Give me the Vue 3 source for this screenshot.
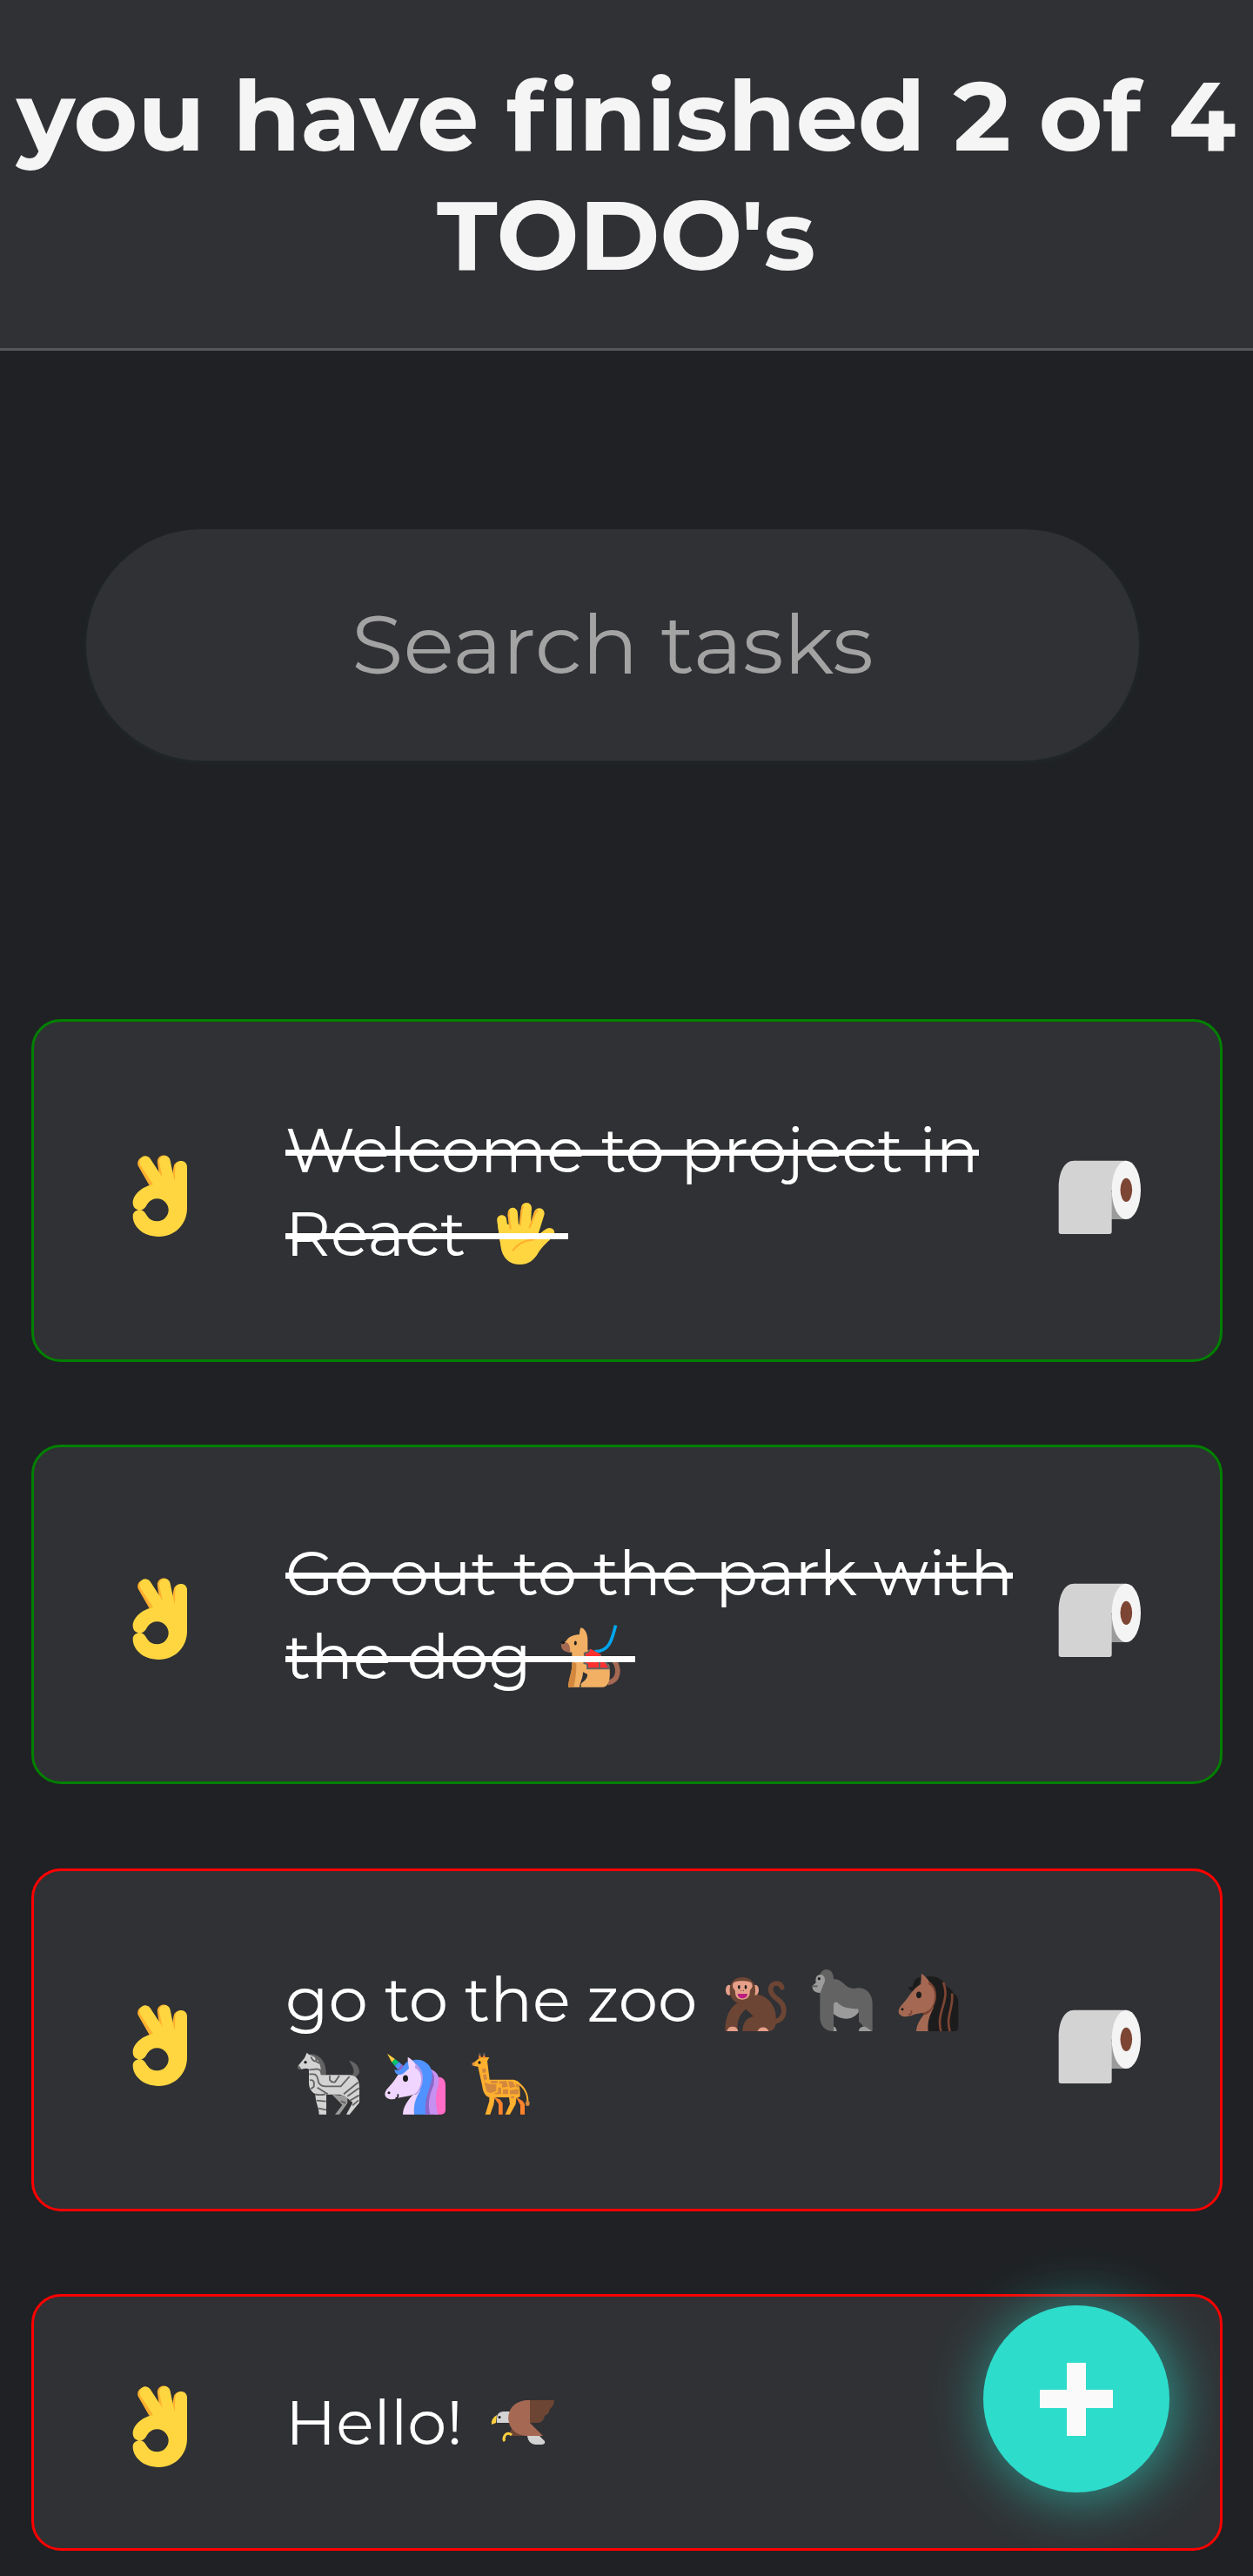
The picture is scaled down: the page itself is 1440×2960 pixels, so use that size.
<script setup>
const vFit = {
  mounted(el, { value }) {
    const natural = el.offsetWidth
    el.style.transform = `scaleX(${value / natural})`
    el.style.marginRight = `${value - natural}px`
  },
}

const tasks = [
  { done: true, cls: 'first', lines: [
    { text: 'Welcome to project in', width: 797, emoji: [] },
    { text: 'React', width: 207, cls: 'react', emoji: ['palm'] },
  ] },
  { done: true, cls: 'second', lines: [
    { text: 'Go out to the park with', width: 836, emoji: [] },
    { text: 'the dog', width: 283, cls: 'dog', emoji: ['dog'] },
  ] },
  { done: false, cls: 'third', lines: [
    { text: 'go to the zoo', width: 473, cls: 'zoo', emoji: ['monkey', 'gorilla', 'horse'] },
    { text: '', width: 0, cls: 'zoo-more', emoji: ['zebra', 'unicorn', 'giraffe'] },
  ] },
  { done: false, cls: 'fourth', lines: [
    { text: 'Hello!', width: 204, cls: 'hello', emoji: ['eagle'] },
  ] },
]

const boxes = {
  palm: '0 0 300 288',
  dog: '0 19 300 288',
  monkey: '0 -3 300 288',
  gorilla: '300 -3 300 288',
  horse: '600 -3 300 288',
  zebra: '0 0 300 288',
  unicorn: '300 0 300 288',
  giraffe: '600 0 300 288',
  eagle: '0 0 100 96',
}
</script>

<template>
  <div class="app">
    <header class="header">
      <h1>
        <span class="row"><span v-fit="1401" class="fit">you have <span class="loose">f</span>inished 2 of 4</span></span>
        <span class="row"><span v-fit="435" class="fit">TODO's</span></span>
      </h1>
    </header>

    <div class="search"><span v-fit="600" class="fit">Search tasks</span></div>

    <main class="list">
      <article v-for="task in tasks" :key="task.cls" class="card" :class="[task.cls, { done: task.done }]">
        <svg class="ok" viewBox="0 0 330 390">
          <g stroke-linecap="round" fill="none">
            <path d="M106 80L146 150" stroke="#ffb02e" stroke-width="43" />
            <path d="M174 74L182 130" stroke="#ffb02e" stroke-width="43" />
            <path d="M230 95L222 140" stroke="#ffb02e" stroke-width="43" />
            <path d="M111 75L160 150" stroke="#ffd640" stroke-width="40" />
            <path d="M178 73L194 150" stroke="#ffd640" stroke-width="38" />
          </g>
          <path fill="#ffd640" fill-rule="evenodd" d="M152 152L213 137L214 93C214 65 255 65 255 93V235C255 291 213 333 158 333C100 333 68 296 68 262C68 248 80 241 92 241C78 241 68 232 68 216C68 187 104 153 152 152ZM92 241C108 241 112 256 119 264C127 275 138 280 152 280A39 39 0 0 0 152 202C138 202 127 208 119 219C112 230 108 241 92 241Z" />
        </svg>

        <div class="text">
          <div v-for="(line, i) in task.lines" :key="i" class="line" :class="line.cls">
            <span v-if="line.text" v-fit="line.width" class="fit">{{ line.text }}</span>
            <svg v-for="name in line.emoji" :key="name" class="emoji" :viewBox="boxes[name]">
              <g v-if="name === 'palm'">
                <g stroke="#ffd640" stroke-linecap="round" fill="none">
                  <path d="M80 95L90 165" stroke-width="33" />
                  <path d="M118 70L124 150" stroke-width="33" />
                  <path d="M165 54L160 150" stroke-width="36" />
                  <path d="M209 73L185 150" stroke-width="36" />
                </g>
                <path fill="#ffd640" d="M66 110L76 185C81 226 106 249 143 249C175 249 192 232 205 210C222 182 240 172 258 150C270 132 250 116 234 126C222 133 214 142 204 145L200 110L90 110Z" />
                <path d="M105 67Q102 75 105 90L110 125M153 50Q148 55 147 75L143 113M202 63Q195 68 192 80L176 121M119 200C135 178 160 165 190 163" fill="none" stroke="#ffb02e" stroke-width="6.5" stroke-linecap="round" />
              </g>
              <g v-else-if="name === 'dog'">
                <path d="M233 54C221 90 217 146 160 144" fill="none" stroke="#00a6ed" stroke-width="11" />
                <path d="M224 172C248 200 246 246 205 252" fill="none" stroke="#a56953" stroke-width="17" />
                <path fill="#f2b064" d="M113 62C125 64 136 80 136 105V138L210 190C216 225 213 267 188 267H69C70 240 82 220 82 190V147C60 147 45 135 45 118L62 108C70 90 95 86 108 85C108 75 110 65 113 62Z" />
                <path fill="#a56953" d="M45 113H60C70 113 76 122 76 147C58 147 45 138 45 125Z" />
                <path fill="#d3883e" d="M84 180C82 215 70 235 69 267H88C94 240 98 215 97 185Z" />
                <path fill="#303134" d="M120 215L135 222C137 240 118 248 113 256V267H108C110 250 120 235 120 215Z" />
                <ellipse cx="51" cy="113" rx="7" ry="5.5" fill="#1c1c1c" />
                <ellipse cx="94" cy="115" rx="4.5" ry="7.5" fill="#1c1c1c" />
                <path fill="#ff3030" stroke="#636363" stroke-width="6" stroke-linejoin="round" d="M125 150L138 146L144 138L180 157L210 198V203H135V188L124 184L129 168Z" />
                <path d="M144 138L180 157" stroke="#ff3030" stroke-width="7" />
                <path d="M177 178V203" stroke="#636363" stroke-width="6" />
              </g>
              <g v-else-if="name === 'monkey'">
                <path d="M212 216C252 205 250 160 222 140C180 110 200 84 217 84C228 84 234 90 236 98" fill="none" stroke="#6d4534" stroke-width="17" stroke-linecap="round" />
                <path fill="#6d4534" d="M125 122C170 113 215 150 215 200C220 235 205 249 190 249H100C100 220 115 202 138 198L112 173C92 187 78 215 84 249H40C40 195 60 160 90 148Z" />
                <path fill="#e6a08a" d="M46 249A20 20 0 0 1 85 249ZM152 249A20 20 0 0 1 190 249Z" />
                <ellipse cx="53" cy="107" rx="11" ry="18" fill="#e6a08a" />
                <ellipse cx="145" cy="107" rx="11" ry="18" fill="#e6a08a" />
                <rect x="56" y="63" width="88" height="91" rx="42" fill="#6d4534" />
                <path fill="#e6a08a" d="M66 92C66 78 78 76 99 76C120 76 134 78 134 92C134 103 124 103 125 117C125 130 115 140 99 140C84 140 75 130 75 117C76 103 66 104 66 92Z" />
                <path fill="#1c1c1c" d="M84 97a4 7 0 0 1 8 0a4 7 0 0 1-8 0M107 97a4 7 0 0 1 8 0a4 7 0 0 1-8 0" />
                <path d="M94 109h3M102 109h3" stroke="#6d4534" stroke-width="4" />
                <path fill="#bb1d80" d="M83 120H117C117 141 83 141 83 120Z" />
              </g>
              <g v-else-if="name === 'gorilla'">
                <path fill="#636363" d="M366 60C368 28 415 24 414 70C447 67 450 102 485 102C520 92 548 115 548 155V249H532L501 215V180L414 155V249C385 249 367 230 367 200V100Z" />
                <path fill="#9b9b9b" d="M353 82C349 60 360 52 372 54C386 58 388 75 378 90L368 117C350 117 338 106 341 92ZM414 190V158C414 146 426 146 431 154C445 168 475 172 497 172Q502 178 500 184C480 213 440 212 414 190ZM414 233Q424 235 425 249H414ZM501 249C501 238 512 232 524 234Q535 240 546 249Z" />
                <circle cx="364" cy="68" r="4.7" fill="#1c1c1c" />
                <path d="M341 94H359" stroke="#636363" stroke-width="6" />
              </g>
              <g v-else-if="name === 'horse'">
                <path fill="#1c1c1c" d="M725 65C760 52 790 68 800 92C815 98 825 110 827 119C838 122 844 135 844 150V235Q844 249 830 249H738L745 175ZM716 65C700 60 690 75 686 96L671 97C673 110 690 115 704 105Z" />
                <path fill="#a56953" d="M745 170C715 200 700 225 699 249H740C737 220 742 200 760 165Z" />
                <path fill="#7d4533" d="M735 72C780 95 775 150 745 184C725 200 720 190 720 180Z" />
                <path fill="#a56953" d="M717 50C728 58 738 66 743 78L741 87C770 100 767 150 748 171C735 187 710 186 690 192C665 203 640 200 638 182C638 165 655 155 672 130C690 105 700 95 715 87Z" />
                <ellipse cx="708" cy="124" rx="9" ry="11.5" fill="#1c1c1c" />
                <circle cx="651" cy="173" r="4.5" fill="#1c1c1c" />
                <path d="M682 177C685 187 680 192 672 191" fill="none" stroke="#7d4533" stroke-width="5" />
                <path d="M792 80C818 145 766 180 784 249M822 119C829 165 799 200 815 249" fill="none" stroke="#7d4533" stroke-width="8" />
              </g>
              <g v-else-if="name === 'zebra'">
                <path fill="#636363" d="M80 42C118 45 136 75 134 114H110L75 50ZM213 65C238 70 250 88 249 107L238 122L222 117C238 104 226 85 213 65Z" />
                <path fill="#9b9b9b" d="M155 182L208 188V212L180 251H165L190 218Z" />
                <path fill="#d3d3d3" d="M68 38L76 45C103 52 120 75 116 115H215C240 117 249 132 249 160V210L215 251H204L226 210L200 188L180 182H135V251H110C110 225 98 215 97 180C80 172 75 155 75 140V95C65 88 55 95 45 96C35 92 35 85 42 78L60 56Z" />
                <g fill="none" stroke="#636363" stroke-width="5.5">
                  <path d="M82 52Q88 68 100 68L112 75M76 97L103 94Q118 96 118 112M76 112H92Q105 113 108 140Q114 153 130 154H185L215 120M147 117V132Q153 142 165 139L180 117M78 133Q96 128 92 155L82 163M104 158L140 181M245 140L195 181M248 160L208 188M97 181Q110 186 133 181M101 203L134 206M108 230L135 235M248 185L215 204M246 202L225 220M185 205L202 212M100 52V68" />
                </g>
                <circle cx="63" cy="71" r="5" fill="#1c1c1c" />
                <path fill="#636363" d="M39 80L50 95C38 100 32 88 39 80Z" />
              </g>
              <g v-else-if="name === 'unicorn'">
                <path fill="#ff6dc6" d="M515 122C538 120 546 135 546 150V235Q546 251 530 251H510Z" />
                <path fill="#c690f1" d="M490 92C522 105 526 120 521 150C509 190 512 220 520 251H480Z" />
                <path fill="#8b67c8" d="M490 92Q513 110 505 150C485 195 487 225 493 251H470L475 150Z" />
                <path fill="#5092ff" d="M425 67C460 52 496 75 499 105C505 150 470 180 478 251H437L440 180Z" />
                <path fill="#ffcf3f" d="M345 41L372 60L361 71Z" />
                <path fill="#00c46a" d="M361 71L372 60L385 70L371 83Z" />
                <path fill="#5092ff" d="M371 83L385 70L397 80L382 97Z" />
                <path fill="#8b67c8" d="M382 97L394 78L403 84L393 103Z" />
                <path fill="#efd5ff" d="M445 172C415 200 400 225 399 251H438C436 220 440 200 460 165Z" />
                <path fill="#b79be8" d="M433 68C480 95 475 150 445 183L420 180Z" />
                <path fill="#efd5ff" d="M416 53C428 60 438 68 443 80L440 90C470 103 467 150 448 173C435 187 410 188 388 193C365 203 340 200 337 182C337 165 355 155 372 130C388 105 395 97 416 90Z" />
                <path fill="#5092ff" d="M416 68C399 78 399 97 386 99L370 97C372 114 388 120 403 108L420 92Z" />
                <ellipse cx="408" cy="127" rx="9" ry="11.5" fill="#1c1c1c" />
                <circle cx="351" cy="176" r="4.5" fill="#1c1c1c" />
                <path d="M382 181V190Q380 196 373 195" fill="none" stroke="#1c1c1c" stroke-width="5" />
              </g>
              <g v-else-if="name === 'giraffe'">
                <path d="M790 137C820 160 830 180 829 208" fill="none" stroke="#ffb02e" stroke-width="6" />
                <path fill="#ff822d" d="M712 190L735 200L743 212V251H729V215ZM788 190L812 205L819 215V251H804V218Z" />
                <path fill="#ffb02e" d="M658 60L668 53L697 54L690 67L698 131H780C800 133 803 150 803 190L790 195L788 215L768 251H752L768 215L765 192H716L712 217L700 251H683L697 205V192C680 187 675 170 672 150L658 86L645 84C637 80 638 72 648 69Z" />
                <path fill="#d3883e" d="M672 94L684 92L686 106L674 108ZM675 114L686 112L690 128L679 135ZM680 140L698 146H721V170L702 178L688 172ZM702 135H725V143H702ZM731 137L755 135L762 155L741 158V145H731ZM762 137H777L788 155L768 160ZM744 164H762V181H744ZM768 168L798 163V181H768ZM727 158H738V181H710L727 174ZM788 143L799 150V158H791ZM772 188H783V195H772Z" />
                <path d="M664 47V57M679 47V57" stroke="#ff822d" stroke-width="7" />
                <path d="M664 40V47M679 40V47" stroke="#636363" stroke-width="6" />
                <circle cx="663" cy="72" r="5" fill="#1c1c1c" />
                <ellipse cx="642" cy="77" rx="5" ry="6" fill="#d3883e" />
                <ellipse cx="829" cy="213" rx="7" ry="9" fill="#d3883e" />
              </g>
              <g v-else>
                <path fill="#6d4534" d="M66 22H97Q97 28 92 32Q91 38 86 40Q84 48 78 48H66ZM50 52L45 60L48 63H62Z" />
                <path fill="#d3d3d3" d="M46 35H38Q31 36 31 42V48H46ZM66 63H80L86 69Q87 73 82 73H75Q67 72 66 63Z" />
                <path fill="#a56953" d="M69 22H64Q45 25 44 43Q46 61 64 63H84L69 48Z" />
                <path fill="#ffcf3f" d="M31 39Q24 43 25 50L30 48Z" />
                <path d="M48 62Q43 58 40 63Q38 67 40 69" fill="none" stroke="#ffcf3f" stroke-width="3" />
                <circle cx="34" cy="41.500" r="1.500" fill="#1c1c1c" />
              </g>
            </svg>
          </div>
        </div>

        <svg class="roll" viewBox="0 0 390 390">
          <path fill="#9b9b9b" d="M225 180H283V273H225Z" />
          <path fill="#d3d3d3" d="M50 165C50 110 70 71 103 71H283V172H233V316Q233 324 225 324H58Q50 324 50 316Z" />
          <ellipse cx="283" cy="172" rx="50" ry="101" fill="#f4f4f4" />
          <ellipse cx="283" cy="172" rx="20.500" ry="41" fill="#7d4533" />
        </svg>
      </article>
    </main>

    <button class="fab" aria-label="Add task">
      <svg viewBox="0 0 84 84"><path fill="#fafafa" d="M31 0H53V31H84V52H53V84H31V52H0V31H31Z" /></svg>
    </button>
  </div>
</template>

<style>
body {
  background: #202124;
}
</style>

<style scoped>
.app {
  position: relative;
  box-sizing: border-box;
  width: 1440px;
  height: 2960px;
  overflow: hidden;
  background: #202124;
  color: #fff;
  font-family: Montserrat, Inter, sans-serif;
  font-variant-ligatures: none;
}
.fit {
  display: inline-block;
  flex: none;
  white-space: nowrap;
  transform-origin: 0 50%;
}
.header {
  box-sizing: border-box;
  height: 403px;
  padding-top: 65px;
  background: #303134;
  border-bottom: 3px solid #56585a;
}
h1 {
  margin: 0;
  color: #f5f5f5;
  font-size: 111.500px;
  line-height: 137px;
  font-weight: 700;
}
.loose {
  letter-spacing: 0.05em;
}
.row {
  display: flex;
  justify-content: center;
}
.search {
  box-sizing: border-box;
  display: flex;
  align-items: center;
  justify-content: center;
  width: 1210px;
  height: 266px;
  margin: 205px 0 297px 99px;
  padding-bottom: 2px;
  border-radius: 133px;
  background: #303134;
  box-shadow: 0 2px 10px rgba(45, 220, 203, 0.05);
  color: #a3a3a3;
  font-size: 95px;
  font-weight: 400;
}
.list {
  display: flex;
  flex-direction: column;
  width: 1369px;
  margin-left: 36px;
}
.card {
  box-sizing: border-box;
  display: flex;
  align-items: center;
  height: 394px;
  margin-bottom: 95px;
  border: 3px solid #f00;
  border-radius: 34px;
  background: #303134;
}
.card.done {
  border-color: #008000;
}
.card.second {
  height: 390px;
  margin-bottom: 97px;
}
.card.fourth {
  height: 295px;
}
.ok {
  width: 110px;
  height: 130px;
  margin: 14px 88px 0 91px;
}
.text {
  width: 872px;
  margin-top: 4px;
  font-size: 71px;
  line-height: 96px;
}
.second .text {
  margin-top: 2px;
}
.second .ok,
.second .roll {
  margin-top: 12px;
}
.fourth .text {
  margin-top: 0;
}
.fourth .ok {
  margin-top: 11px;
}
.line {
  position: relative;
  display: flex;
  width: fit-content;
  height: 96px;
}
.done .line::after {
  content: "";
  position: absolute;
  top: 47px;
  left: 0;
  width: 100%;
  height: 7px;
  background: #fff;
}
.emoji {
  flex: none;
  width: 100px;
  height: 96px;
}
.react .emoji {
  margin: 0 3px 0 15px;
}
.dog .emoji {
  margin-left: 19px;
}
.zoo .fit + .emoji {
  margin-left: 19px;
}
.zoo-more .emoji:first-child {
  margin-left: 2px;
}
.hello .emoji {
  margin-left: 8px;
}
.roll {
  width: 130px;
  height: 130px;
  margin-top: 14px;
}
.fourth .roll {
  visibility: hidden;
}
.fab {
  position: absolute;
  left: 1130px;
  top: 2649px;
  display: flex;
  align-items: center;
  justify-content: center;
  width: 214px;
  height: 215px;
  padding: 0;
  border: 0;
  border-radius: 50%;
  background: #2ddccb;
  box-shadow: 5px 5px 68px rgba(45, 220, 203, 0.65);
}
.fab svg {
  width: 84px;
  height: 84px;
}
</style>
